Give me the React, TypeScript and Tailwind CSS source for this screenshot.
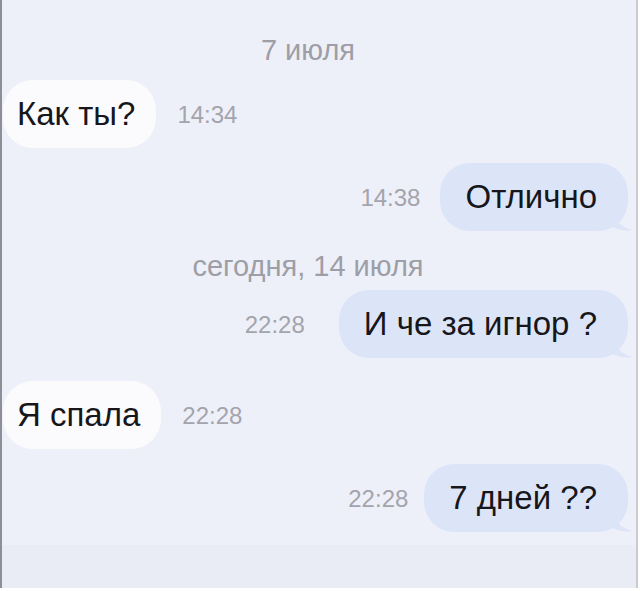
import React from 'react';

type Msg = {
  kind: 'in' | 'out' | 'date';
  text: string;
  time?: string;
  mt: string;
  gap?: string;
};

const thread: Msg[] = [
  { kind: 'date', text: '7 июля', mt: 'mt-[35px]' },
  { kind: 'in', text: 'Как ты?', time: '14:34', mt: 'mt-[15px]', gap: 'gap-[21px]' },
  { kind: 'out', text: 'Отлично', time: '14:38', mt: 'mt-[15px]', gap: 'gap-[20px]' },
  { kind: 'date', text: 'сегодня, 14 июля', mt: 'mt-[20px]' },
  { kind: 'out', text: 'И че за игнор ?', time: '22:28', mt: 'mt-[9px]', gap: 'gap-[34px]' },
  { kind: 'in', text: 'Я спала', time: '22:28', mt: 'mt-[23px]', gap: 'gap-[21px]' },
  { kind: 'out', text: '7 дней ??', time: '22:28', mt: 'mt-[15px]', gap: 'gap-[16px]' },
];

// little hook at the bottom-right corner of sent bubbles
const Tail = () => (
  <svg className="absolute -right-[5px] bottom-0" width="20" height="22" viewBox="0 0 20 22">
    <path d="M0 0 C2 10 6 18 20 21 C12 22 6 21 0 18 Z" fill="#dce5f7" />
  </svg>
);

const Time = ({ value }: { value: string }) => (
  <span className="mb-[20px] text-[24px] leading-[26px] text-[#a3a4ac]">{value}</span>
);

const Row = ({ m }: { m: Msg }) => {
  if (m.kind === 'date') {
    return (
      <div className={`${m.mt} pr-[22px] text-center text-[29px] leading-[30px] text-[#9d9ea6]`}>
        {m.text}
      </div>
    );
  }
  const bubble = (
    <div
      className={`relative flex h-[68px] items-center rounded-[30px] text-[33px] text-[#16161b] ${
        m.kind === 'out' ? 'bg-[#dce5f7] pl-[25px] pr-[31px]' : 'bg-[#fbfbfd] pl-[14px] pr-[21px]'
      }`}
    >
      {m.kind === 'out' && <Tail />}
      <span className="relative">{m.text}</span>
    </div>
  );
  return m.kind === 'out' ? (
    <div className={`${m.mt} ${m.gap} flex items-end justify-end pr-[8px]`}>
      {m.time && <Time value={m.time} />}
      {bubble}
    </div>
  ) : (
    <div className={`${m.mt} ${m.gap} flex items-end pl-[1px]`}>
      {bubble}
      {m.time && <Time value={m.time} />}
    </div>
  );
};

export default function App() {
  return (
    <div className="flex h-[591px] w-[640px] flex-col bg-white font-['Liberation_Sans',Arial,sans-serif]">
      <div className="flex flex-1">
        <div className="w-[2px] bg-[#8e8f96]" />
        <div className="flex flex-1 flex-col bg-[#eef0f9]">
          <div className="flex flex-1 flex-col">
            {thread.map((m, i) => (
              <Row key={i} m={m} />
            ))}
          </div>
          <div className="h-[43px] bg-[#e9ebf5]" />
        </div>
        <div className="w-[2px] bg-[#c9cad2]" />
        <div className="w-[2px] bg-white" />
      </div>
      <div className="h-[3px] bg-white" />
    </div>
  );
}
